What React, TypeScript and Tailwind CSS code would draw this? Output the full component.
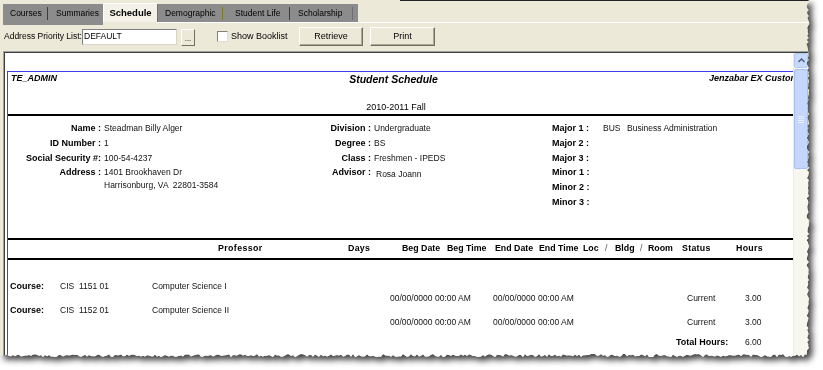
import React from "react";

function tornClip(): string {
  let seed = 11;
  const rnd = () => {
    seed = (seed * 9301 + 49297) % 233280;
    return seed / 233280;
  };
  const pts: string[] = ["0px 0px"];
  for (let y = 0; y <= 354; y += 2) pts.push(`${(806.5 + rnd() * 3).toFixed(1)}px ${y}px`);
  for (let x = 807; x >= 0; x -= 2) pts.push(`${x}px ${(354 + rnd() * 3).toFixed(1)}px`);
  pts.push("0px 357px");
  return `polygon(${pts.join(",")})`;
}

const clip = tornClip();

function Sep({ c }: { c: string }) {
  return <div className={`w-px h-[13px] ${c}`} />;
}

function Btn({ children, w }: { children: React.ReactNode; w: string }) {
  return (
    <div
      className={`${w} h-[19px] flex items-center justify-center bg-[#ECE9D8] border border-t-white border-l-white border-r-[#716F64] border-b-[#716F64] shadow-[inset_-1px_-1px_0_#ACA899] text-[9px] text-black`}
    >
      {children}
    </div>
  );
}

function InfoRow({ label, value, lw, extra }: { label: string; value?: React.ReactNode; lw: string; extra?: string }) {
  return (
    <div className="flex h-[14.8px] leading-[14.8px] items-start">
      <div className={`${lw} ${extra ?? "text-right"} font-bold text-[9px] whitespace-pre shrink-0`}>{label}</div>
      <div className="ml-[3px] text-[8.5px] text-[#111] whitespace-pre">{value}</div>
    </div>
  );
}

export default function App() {
  return (
    <div className="w-[823px] h-[370px] bg-white overflow-hidden font-['Liberation_Sans',Arial,sans-serif] text-black">
      <div className="[filter:drop-shadow(4px_4px_3px_rgba(0,0,0,0.75))]">
        <div className="w-[810px] h-[357px] bg-[#ECE9D8] flex flex-col overflow-hidden" style={{ clipPath: clip }}>
          {/* top line */}
          <div className="flex h-px shrink-0">
            <div className="w-[400px]" />
            <div className="flex-1 bg-[#222]" />
          </div>
          {/* tabs */}
          <div className="flex mt-[3px] pl-[3px] h-[21px] shrink-0 items-start">
            <div className="w-[100px] h-[21px] bg-[#8C8C8C] flex items-center text-[8.5px] pb-[2px]">
              <div className="w-[44px] pl-[7px]">Courses</div>
              <Sep c="bg-[#8B1A1A]" />
              <div className="pl-[8px]">Summaries</div>
            </div>
            <div className="w-[54px] h-[19px] -mt-px bg-[#F4F2E8] border-t border-l border-white flex items-center justify-center font-bold text-[9.5px]">
              Schedule
            </div>
            <div className="flex-1 h-[19px] border-b border-white flex items-start">
              <div className="h-[18px] bg-[#8C8C8C] flex items-center text-[8.5px]">
                <div className="w-px h-[18px] bg-[#7A7A2A]" />
                <div className="w-[64px] pl-[7px]">Demographic</div>
                <Sep c="bg-[#7A7A2A]" />
                <div className="w-[66px] pl-[12px]">Student Life</div>
                <Sep c="bg-[#8B1A1A]" />
                <div className="w-[62px] pl-[8px]">Scholarship</div>
                <Sep c="bg-[#6E6E6E]" />
                <div className="w-[5px]" />
              </div>
            </div>
          </div>
          {/* controls */}
          <div className="flex items-center h-[19px] mt-[2px] pl-[4px] shrink-0 text-[8.5px]">
            <div className="w-[76px] whitespace-nowrap">Address Priority List:</div>
            <div className="ml-[2px] w-[95px] h-[16px] bg-white border border-[#7F7F7F] border-b-[#D8D5C8] border-r-[#D8D5C8] flex items-center pl-[1px] text-[8.5px]">
              DEFAULT
            </div>
            <div className="ml-[4px] mt-[2px] w-[14px] h-[17px] flex items-end justify-center pb-[2px] bg-[#ECE9D8] border border-t-white border-l-white border-r-[#716F64] border-b-[#716F64] text-[8px] leading-none">
              ...
            </div>
            <div className="ml-[22px] w-[11px] h-[11px] bg-white border border-[#808080] border-b-[#E0DED4] border-r-[#E0DED4]" />
            <div className="ml-[3px] w-[68px] text-[9px]">Show Booklist</div>
            <Btn w="w-[64px]">Retrieve</Btn>
            <div className="w-[7px]" />
            <Btn w="w-[65px]">Print</Btn>
          </div>
          {/* report panel */}
          <div className="flex-1 mt-[5px] ml-[3px] mr-[2px] border-t border-l border-[#A0A0A0] flex flex-col min-h-0">
            <div className="flex-1 border-t border-l border-[#404040] flex min-h-0">
              <div className="flex-1 bg-white overflow-hidden pl-[2px] pt-[18px] min-w-0">
                <div className="w-[800px] h-[400px] border-t border-l border-[#3F3FEA]">
                  {/* heading */}
                  <div className="flex h-[14px] items-start pt-[2px] leading-none">
                    <div className="w-[300px] pl-[3px] font-bold italic text-[9px]">TE_ADMIN</div>
                    <div className="w-[176px] text-center font-bold italic text-[10.5px]">Student Schedule</div>
                    <div className="ml-[228px] font-bold italic text-[9px] whitespace-nowrap">Jenzabar EX Customer</div>
                  </div>
                  <div className="mt-[15px] h-[12px] leading-[12px] w-[776px] text-center text-[9px]">2010-2011 Fall</div>
                  <div className="mt-[1px] h-[2px] bg-black" />
                  {/* info */}
                  <div className="flex pt-[5px]">
                    <div className="w-[322px]">
                      <InfoRow lw="w-[93px]" label="Name :" value="Steadman Billy Alger" />
                      <InfoRow lw="w-[93px]" label="ID Number :" value="1" />
                      <InfoRow lw="w-[93px]" label="Social Security #:" value="100-54-4237" />
                      <div className="flex items-start">
                        <div className="w-[93px] text-right font-bold text-[9px] leading-[14.8px]">Address :</div>
                        <div className="ml-[3px] text-[8.5px] text-[#111]">
                          <div className="leading-[15px]">1401 Brookhaven Dr</div>
                          <div className="leading-[11px] whitespace-pre">Harrisonburg, VA  22801-3584</div>
                        </div>
                      </div>
                    </div>
                    <div className="w-[222px]">
                      <InfoRow lw="w-[41px]" label="Division :" value="Undergraduate" />
                      <InfoRow lw="w-[41px]" label="Degree :" value="BS" />
                      <InfoRow lw="w-[41px]" label="Class :" value="Freshmen - IPEDS" />
                      <InfoRow lw="w-[41px]" label="Advisor :" value={<span className="inline-block ml-[2px] pt-[2px]">Rosa Joann</span>} />
                    </div>
                    <div>
                      <InfoRow
                        lw="w-[51px]"
                        extra="text-left"
                        label="Major 1 :"
                        value={
                          <span className="flex -ml-[3px]">
                            <span className="w-[24px]">BUS</span>
                            <span>Business Administration</span>
                          </span>
                        }
                      />
                      <InfoRow lw="w-[51px]" extra="text-left" label="Major 2 :" />
                      <InfoRow lw="w-[51px]" extra="text-left" label="Major 3 :" />
                      <InfoRow lw="w-[51px]" extra="text-left" label="Minor 1 :" />
                      <InfoRow lw="w-[51px]" extra="text-left" label="Minor 2 :" />
                      <InfoRow lw="w-[51px]" extra="text-left" label="Minor 3 :" />
                    </div>
                  </div>
                  {/* table header */}
                  <div className="mt-[28px] h-[2px] bg-black" />
                  <div className="h-[18px] flex items-center pl-[210px] font-bold text-[8.8px] whitespace-nowrap">
                    <div className="w-[130px] tracking-[0.4px]">Professor</div>
                    <div className="w-[54px] tracking-[0.3px]">Days</div>
                    <div className="w-[45px]">Beg Date</div>
                    <div className="w-[48px]">Beg Time</div>
                    <div className="w-[44px]">End Date</div>
                    <div className="w-[44px]">End Time</div>
                    <div className="w-[22px]">Loc</div>
                    <div className="w-[10px] font-normal text-[#555]">/</div>
                    <div className="w-[25px]">Bldg</div>
                    <div className="w-[8px] font-normal text-[#555]">/</div>
                    <div className="w-[34px]">Room</div>
                    <div className="w-[54px] tracking-[0.3px]">Status</div>
                    <div className="tracking-[0.3px]">Hours</div>
                  </div>
                  <div className="h-[2px] bg-black" />
                  {/* rows */}
                  <div className="text-[8.5px] text-[#111]">
                    <div className="mt-[21px] h-[11px] leading-[11px] flex pl-[2px] whitespace-pre">
                      <div className="w-[50px] font-bold text-[9px] text-black">Course:</div>
                      <div className="w-[92px]">CIS  1151 01</div>
                      <div>Computer Science I</div>
                    </div>
                    <div className="h-[12px] leading-[12px] flex pl-[382px] whitespace-pre">
                      <div className="w-[103px]">00/00/0000 00:00 AM</div>
                      <div className="w-[194px]">00/00/0000 00:00 AM</div>
                      <div className="w-[58px]">Current</div>
                      <div>3.00</div>
                    </div>
                    <div className="h-[12px] leading-[12px] flex pl-[2px] whitespace-pre">
                      <div className="w-[50px] font-bold text-[9px] text-black">Course:</div>
                      <div className="w-[92px]">CIS  1152 01</div>
                      <div>Computer Science II</div>
                    </div>
                    <div className="h-[12px] leading-[12px] flex pl-[382px] whitespace-pre">
                      <div className="w-[103px]">00/00/0000 00:00 AM</div>
                      <div className="w-[194px]">00/00/0000 00:00 AM</div>
                      <div className="w-[58px]">Current</div>
                      <div>3.00</div>
                    </div>
                    <div className="mt-[8px] h-[12px] leading-[12px] flex pl-[668px] whitespace-pre">
                      <div className="w-[69px] font-bold text-[9px] text-black">Total Hours:</div>
                      <div>6.00</div>
                    </div>
                  </div>
                </div>
              </div>
              {/* scrollbar */}
              <div className="w-[15px] flex flex-col bg-[#F7F6EF] border-l border-[#EDEBE0]">
                <div className="h-[15px] rounded-[2px] bg-[#C8D9FB] border border-[#B2C8F2] flex items-center justify-center">
                  <svg width="7" height="5" viewBox="0 0 7 5">
                    <path d="M0.5 4 L3.5 1 L6.5 4" fill="none" stroke="#4D6185" strokeWidth="1.5" />
                  </svg>
                </div>
                <div className="mt-px h-[100px] rounded-[2px] bg-[#C4D6FB] border border-[#A9C1F0] flex items-center justify-center">
                  <div className="flex flex-col gap-px">
                    <div className="w-[6px] h-px bg-[#E8EFFE]" />
                    <div className="w-[6px] h-px bg-[#E8EFFE]" />
                    <div className="w-[6px] h-px bg-[#E8EFFE]" />
                    <div className="w-[6px] h-px bg-[#E8EFFE]" />
                  </div>
                </div>
              </div>
            </div>
          </div>
        </div>
      </div>
    </div>
  );
}
